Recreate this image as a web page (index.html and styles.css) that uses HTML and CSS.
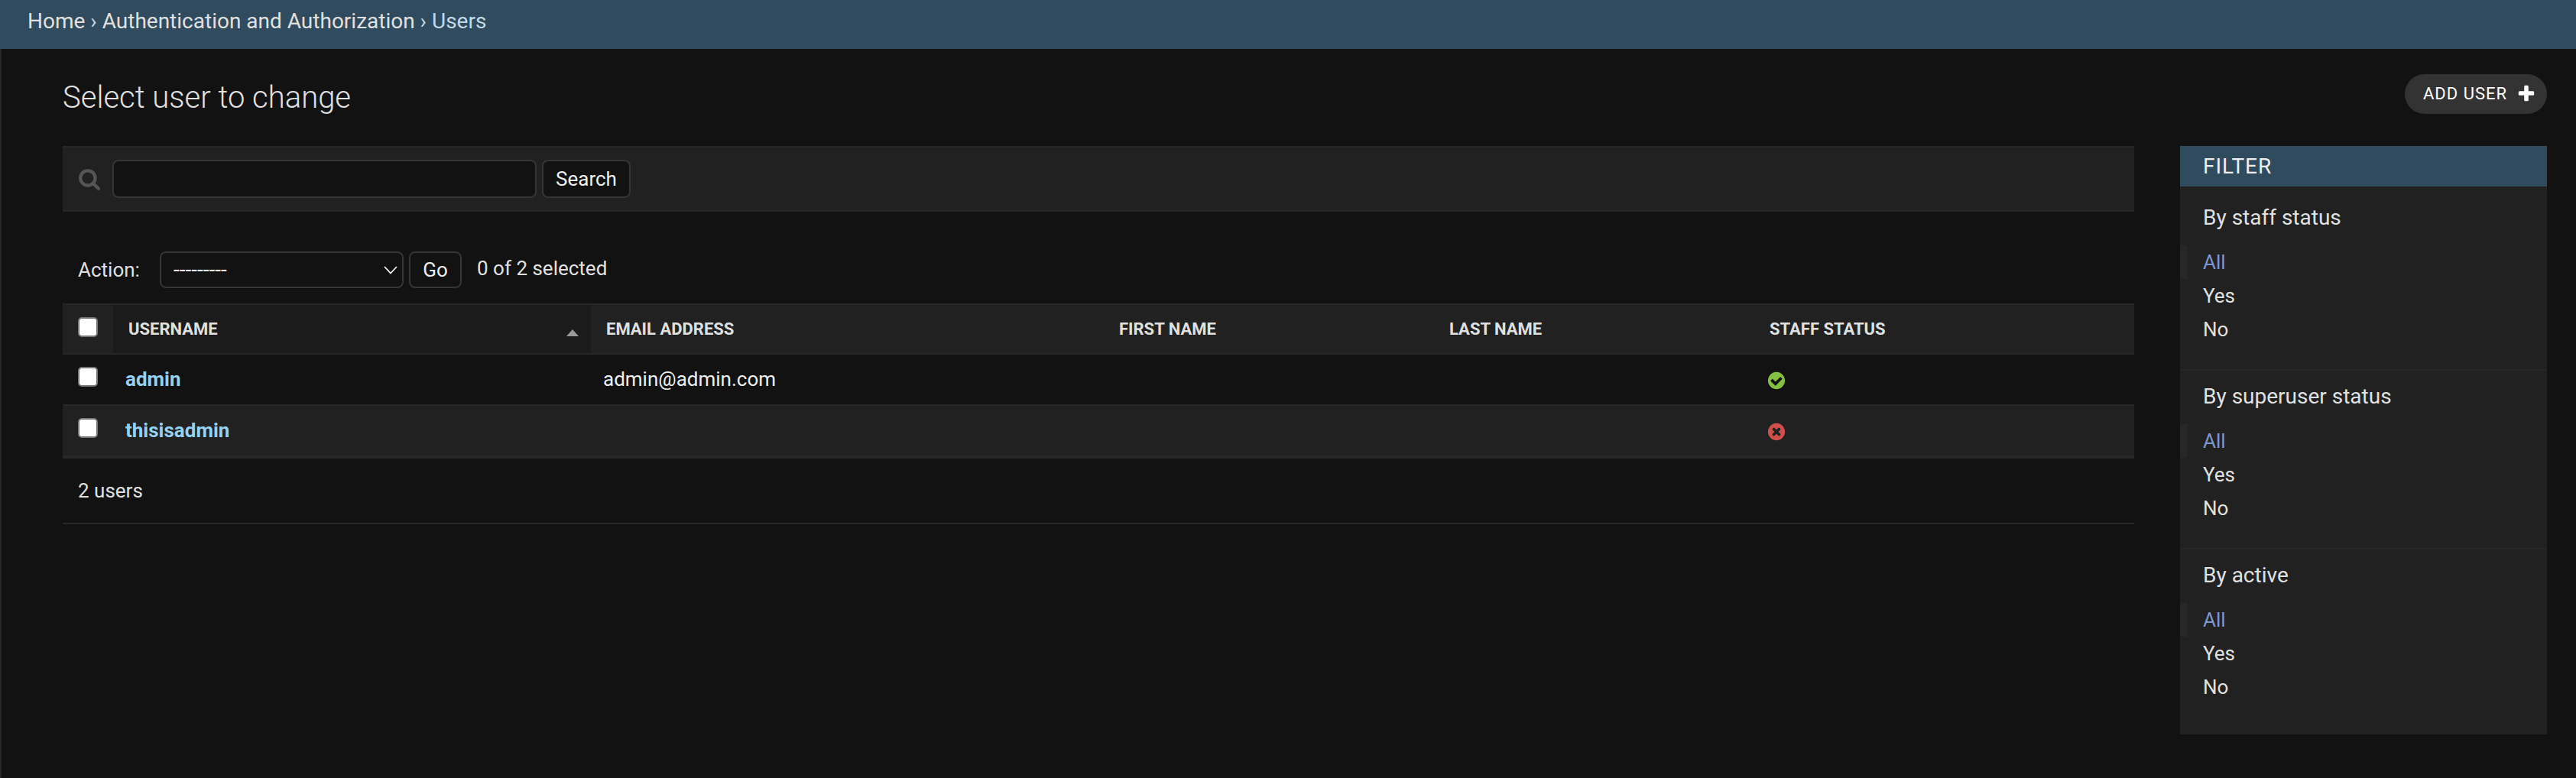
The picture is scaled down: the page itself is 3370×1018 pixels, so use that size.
FILE: index.html
```html
<!DOCTYPE html>
<html lang="en">
<head>
<meta charset="utf-8">
<title>Select user to change</title>
<link rel="stylesheet" href="styles.css">
</head>
<body>
<nav class="breadcrumbs"><a>Home</a> › <a>Authentication and Authorization</a> › Users</nav>
<main class="content">
  <header class="content-head">
    <h1>Select user to change</h1>
    <a class="addlink"><span>Add user</span><svg class="plus" viewBox="0 0 1792 1792"><path fill="#fff" d="M1600 736v192q0 40-28 68t-68 28h-416v416q0 40-28 68t-68 28h-192q-40 0-68-28t-28-68v-416h-416q-40 0-68-28t-28-68v-192q0-40 28-68t68-28h416v-416q0-40 28-68t68-28h192q40 0 68 28t28 68v416h416q40 0 68 28t28 68z"/></svg></a>
  </header>
  <div class="changelist">
    <section class="results">
      <form class="toolbar">
        <svg class="magnifier" viewBox="0 0 1792 1792"><path fill="#555" d="M1216 832q0-185-131.5-316.5t-316.5-131.5-316.5 131.5-131.5 316.5 131.5 316.5 316.5 131.5 316.5-131.5 131.5-316.5zm512 832q0 52-38 90t-90 38q-54 0-90-38l-343-342q-179 124-399 124-143 0-273.5-55.5t-225-150-150-225-55.5-273.5 55.5-273.5 150-225 225-150 273.5-55.5 273.5 55.5 225 150 150 225 55.5 273.5q0 220-124 399l343 343q37 37 37 90z"/></svg>
        <input class="searchbar" type="text">
        <button class="btn btn-search" type="button">Search</button>
      </form>
      <div class="actions">
        <span class="action-label">Action:</span>
        <div class="select"><span>---------</span><svg class="chevron" viewBox="0 0 18 11"><path d="M1 1l8 8.500 8-8.500" fill="none" stroke="#eee" stroke-width="1.800"/></svg></div>
        <button class="btn btn-go" type="button">Go</button>
        <span class="counter">0 of 2 selected</span>
      </div>
      <table class="list">
        <colgroup><col class="c-check"><col class="c-user"><col class="c-email"><col class="c-first"><col class="c-last"><col class="c-staff"></colgroup>
        <thead>
          <tr>
            <th class="check"><input type="checkbox"></th>
            <th class="sorted"><div class="sort-head"><span>Username</span><svg class="ascending" viewBox="0 0 16 9"><path d="M8 0l8 9H0z" fill="#999"/></svg></div></th>
            <th>Email address</th><th>First name</th><th>Last name</th><th>Staff status</th>
          </tr>
        </thead>
        <tbody>
          <tr>
            <td class="check"><input type="checkbox"></td>
            <td class="user">admin</td><td>admin@admin.com</td><td></td><td></td>
            <td><svg class="status" viewBox="0 0 1792 1792"><path fill="#84bf41" d="M1412 734q0-28-18-46l-91-90q-19-19-45-19t-45 19l-408 407-226-226q-19-19-45-19t-45 19l-91 90q-18 18-18 46 0 27 18 45l362 362q19 19 45 19 27 0 46-19l543-543q18-18 18-45zm252 162q0 209-103 385.500t-279.500 279.500-385.500 103-385.500-103-279.500-279.500-103-385.500 103-385.500 279.500-279.500 385.500-103 385.500 103 279.500 279.500 103 385.500z"/></svg></td>
          </tr>
          <tr>
            <td class="check"><input type="checkbox"></td>
            <td class="user">thisisadmin</td><td></td><td></td><td></td>
            <td><svg class="status" viewBox="0 0 1792 1792"><path fill="#cf4f4b" d="M1277 1122q0-26-19-45l-181-181 181-181q19-19 19-45 0-27-19-46l-90-90q-19-18-46-18-26 0-45 18l-181 181-181-181q-19-18-45-18-27 0-46 18l-90 90q-19 19-19 46 0 26 19 45l181 181-181 181q-19 19-19 45 0 27 19 46l90 90q19 18 46 18 26 0 45-18l181-181 181 181q19 18 45 18 27 0 46-18l90-90q19-19 19-46zm387-226q0 209-103 385.500t-279.500 279.500-385.500 103-385.500-103-279.500-279.500-103-385.500 103-385.500 279.500-279.500 385.500-103 385.500 103 279.500 279.500 103 385.500z"/></svg></td>
          </tr>
        </tbody>
      </table>
      <p class="paginator">2 users</p>
    </section>
    <aside class="filter">
      <h2>Filter</h2>
      <section><h3>By staff status</h3><ul><li class="selected">All</li><li>Yes</li><li>No</li></ul></section>
      <section><h3>By superuser status</h3><ul><li class="selected">All</li><li>Yes</li><li>No</li></ul></section>
      <section><h3>By active</h3><ul><li class="selected">All</li><li>Yes</li><li>No</li></ul></section>
    </aside>
  </div>
</main>
</body>
</html>
```
FILE: styles.css
```css
* { box-sizing: border-box; }
html { background: #121212; }
body {
  margin: 0;
  height: 1018px;
  display: flex;
  flex-direction: column;
  font: 26px/30px Roboto, sans-serif;
  color: #e0e0e0;
  background: #121212;
}
h1, h2, h3, p, ul { margin: 0; padding: 0; font-weight: 400; }
ul { list-style: none; }
svg { display: block; flex: none; }

.breadcrumbs {
  height: 64px;
  padding: 11px 36px 0;
  font-size: 28px;
  line-height: 33px;
  background: #304b5d;
  color: #c3d9e8;
}
.breadcrumbs a { color: #e0e0e0; }

.content {
  flex: 1;
  padding: 33px 38px 0 80px;
  border-left: 2px solid #272727;
}
.content-head {
  height: 94px;
  display: flex;
  justify-content: space-between;
  align-items: flex-start;
}
.content-head h1 {
  font-size: 40px;
  line-height: 47px;
  font-weight: 300;
  padding-top: 7px;
}
.addlink {
  display: flex;
  width: 186px;
  height: 52px;
  padding: 13px 0 0 24px;
  gap: 12px;
  border-radius: 26px;
  background: #333;
  color: #fff;
  font-size: 22px;
  line-height: 25px;
  letter-spacing: 1px;
  text-transform: uppercase;
}
.plus { width: 26px; height: 26px; }

.changelist {
  display: grid;
  grid-template-columns: 1fr 480px;
  gap: 60px;
  align-items: start;
}
.toolbar {
  display: flex;
  align-items: center;
  height: 86px;
  padding-left: 20px;
  background: #212121;
  border: solid #272727;
  border-width: 2px 0;
}
.magnifier { width: 30px; height: 30px; }
.searchbar, .btn, .select {
  border: 2px solid #353535;
  border-radius: 8px;
  background: #121212;
  color: #eee;
}
.searchbar { width: 555px; height: 50px; margin: 0 7px 0 15px; }
.btn { padding: 0; font: 26px/30px Roboto, sans-serif; }
.btn-search { width: 116px; height: 50px; }

.actions {
  display: flex;
  align-items: flex-start;
  height: 120px;
  padding: 52px 0 0 20px;
}
.action-label { width: 107px; padding-top: 9px; }
.counter { padding-top: 7px; }
.select {
  display: flex;
  align-items: center;
  justify-content: space-between;
  width: 319px;
  height: 48px;
  padding: 0 6px 0 16px;
  font-size: 28px;
}
.chevron { width: 18px; height: 11px; }
.btn-go { width: 69px; height: 48px; margin: 0 20px 0 7px; }

.list {
  width: 100%;
  table-layout: fixed;
  border-collapse: separate;
  border-spacing: 0;
}
.c-check { width: 66px; }
.c-user { width: 625px; }
.c-email { width: 671px; }
.c-first { width: 432px; }
.c-last { width: 419px; }
th {
  height: 67px;
  padding: 19px 20px 0;
  border: solid #272727;
  border-width: 2px 0;
  background: #212121;
  font-size: 22px;
  line-height: 25px;
  font-weight: 700;
  text-align: left;
  text-transform: uppercase;
  vertical-align: top;
}
th.sorted { background: #1b1b1b; padding: 16px 16px 0 20px; }
th.sorted span { padding-top: 3px; }
.sort-head { display: flex; justify-content: space-between; }
.ascending { width: 16px; height: 9px; margin-top: 16px; }
td {
  height: 65px;
  padding: 17px 16px 0;
  color: #eee;
  vertical-align: top;
}
tbody tr + tr td {
  height: 71px;
  background: #212121;
  border: solid #272727;
  border-width: 2px 0 4px;
}
th.check, td.check { padding: 16px 0 0 20px; }
.check input {
  appearance: none;
  display: block;
  width: 26px;
  height: 26px;
  margin: 0;
  border: 2px solid #767676;
  border-radius: 5px;
  background: #fff;
}
td.user { color: #93d1f7; font-weight: 700; }
.status { width: 26px; height: 26px; margin-top: 4px; }
.paginator {
  height: 86px;
  padding: 27px 20px 0;
  border-bottom: 2px solid #272727;
}

.filter { height: 770px; background: #212121; }
.filter h2 {
  height: 53px;
  padding: 10px 30px 0;
  background: #304b5d;
  color: #eee;
  font-size: 28px;
  line-height: 33px;
  letter-spacing: 1px;
  text-transform: uppercase;
}
.filter section { height: 234px; padding-top: 17px; border-bottom: 2px solid #272727; }
.filter section:nth-of-type(1) { height: 241px; padding-top: 24px; }
.filter section:last-child { border: 0; }
.filter h3 { padding: 0 30px; font-size: 28px; line-height: 33px; }
.filter ul { padding-top: 20px; }
.filter li { height: 44px; padding: 7px 20px; border-left: 10px solid transparent; }
.filter .selected { border-color: #272727; color: #7d98cd; }
```
